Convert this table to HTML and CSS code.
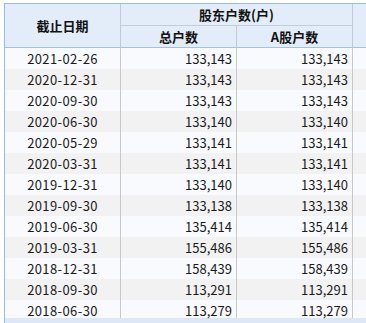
FILE: index.html
```html
<!DOCTYPE html>
<html lang="zh">
<head>
<meta charset="utf-8">
<link rel="stylesheet" href="styles.css">
</head>
<body>
<div class="grid">
  <table class="tbl">
    <colgroup>
      <col class="w1"><col class="w2"><col class="w3"><col class="w4">
    </colgroup>
    <thead>
      <tr>
        <th class="c1" rowspan="2">截止日期</th>
        <th class="group" colspan="2">股东户数(户)</th>
        <th class="c4" rowspan="2"></th>
      </tr>
      <tr>
        <th class="sub">总户数</th>
        <th class="sub">A股户数</th>
      </tr>
    </thead>
    <tbody>
      <tr><td class="d">2021-02-26</td><td class="n">133,143</td><td class="n">133,143</td><td></td></tr>
      <tr><td class="d">2020-12-31</td><td class="n">133,143</td><td class="n">133,143</td><td></td></tr>
      <tr><td class="d">2020-09-30</td><td class="n">133,143</td><td class="n">133,143</td><td></td></tr>
      <tr><td class="d">2020-06-30</td><td class="n">133,140</td><td class="n">133,140</td><td></td></tr>
      <tr><td class="d">2020-05-29</td><td class="n">133,141</td><td class="n">133,141</td><td></td></tr>
      <tr><td class="d">2020-03-31</td><td class="n">133,141</td><td class="n">133,141</td><td></td></tr>
      <tr><td class="d">2019-12-31</td><td class="n">133,140</td><td class="n">133,140</td><td></td></tr>
      <tr><td class="d">2019-09-30</td><td class="n">133,138</td><td class="n">133,138</td><td></td></tr>
      <tr><td class="d">2019-06-30</td><td class="n">135,414</td><td class="n">135,414</td><td></td></tr>
      <tr><td class="d">2019-03-31</td><td class="n">155,486</td><td class="n">155,486</td><td></td></tr>
      <tr><td class="d">2018-12-31</td><td class="n">158,439</td><td class="n">158,439</td><td></td></tr>
      <tr><td class="d">2018-09-30</td><td class="n">113,291</td><td class="n">113,291</td><td></td></tr>
      <tr class="last"><td class="d">2018-06-30</td><td class="n">113,279</td><td class="n">113,279</td><td></td></tr>
    </tbody>
  </table>
  <div class="band"></div>
</div>
</body>
</html>
```
FILE: styles.css
```css
html, body {
  margin: 0;
  padding: 0;
  background: #ffffff;
  overflow: hidden;
}
body {
  font-family: "Noto Sans CJK SC", "Noto Sans", sans-serif;
  font-size: 13px;
  color: #1a1a1a;
}
.grid {
  margin: 3px 0 0 4px;
  border-left: 1px solid #99bbe8;
  border-top: 1px solid #99bbe8;
}
.band {
  height: 10px;
  background: #dde7f5;
}
.tbl {
  border-collapse: separate;
  border-spacing: 0;
  table-layout: fixed;
  width: 361px;
}
.w1, .w2, .w3 {
  width: 116px;
}
.w4 {
  width: 13px;
}
.tbl th {
  background: #e3edf9;
  font-weight: bold;
  color: #111;
  padding: 0;
  height: 21px;
  line-height: 21px;
  text-align: center;
  border-right: 1px solid #c3c9d1;
}
.tbl th.c1,
.tbl th.sub,
.tbl th.c4 {
  border-bottom: 1px solid #a3c0e8;
}
.tbl th.group {
  border-bottom: 1px solid #c3ccd8;
}
.tbl th.c4 {
  border-right: none;
}
.tbl td {
  height: 21px;
  line-height: 21px;
  padding: 0;
  border-right: 1px solid #c8c8c8;
  white-space: nowrap;
}
.tbl td:last-child {
  border-right: none;
}
.tbl tbody tr:nth-child(odd) td {
  background: #f9fafd;
}
.tbl tbody tr:nth-child(even) td {
  background: #f2f2f2;
}
.tbl tr.last td {
  height: 15px;
  line-height: 15px;
  padding-top: 3px;
}
.tbl td.d {
  text-align: center;
  letter-spacing: 0.4px;
}
.tbl td.n {
  text-align: right;
  padding-right: 4px;
}
```
